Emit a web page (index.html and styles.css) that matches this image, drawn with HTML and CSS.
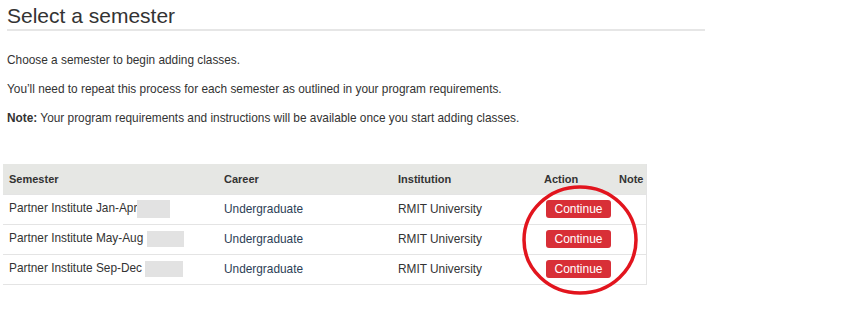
FILE: index.html
```html
<!DOCTYPE html>
<html>
<head>
<meta charset="utf-8">
<link rel="stylesheet" href="styles.css">
</head>
<body>
<div class="page">
  <h1 class="title">Select a semester</h1>
  <p class="intro first">Choose a semester to begin adding classes.</p>
  <p class="intro">You’ll need to repeat this process for each semester as outlined in your program requirements.</p>
  <p class="intro"><b>Note:</b> Your program requirements and instructions will be available once you start adding classes.</p>
  <table class="sem">
    <thead>
      <tr>
        <th class="c1">Semester</th>
        <th class="c2">Career</th>
        <th class="c3">Institution</th>
        <th class="c4">Action</th>
        <th class="c5">Note</th>
      </tr>
    </thead>
    <tbody>
      <tr>
        <td>Partner Institute Jan-Apr<span class="redact r1"></span></td>
        <td class="career">Undergraduate</td>
        <td>RMIT University</td>
        <td><button class="btn">Continue</button></td>
        <td></td>
      </tr>
      <tr>
        <td>Partner Institute May-Aug <span class="redact r2"></span></td>
        <td class="career">Undergraduate</td>
        <td>RMIT University</td>
        <td><button class="btn">Continue</button></td>
        <td></td>
      </tr>
      <tr>
        <td>Partner Institute Sep-Dec <span class="redact r3"></span></td>
        <td class="career">Undergraduate</td>
        <td>RMIT University</td>
        <td><button class="btn">Continue</button></td>
        <td></td>
      </tr>
    </tbody>
  </table>
  <div class="spacer"></div>
  <svg class="circle" width="130" height="120" viewBox="0 0 130 120">
    <ellipse cx="65" cy="59" rx="56" ry="53" fill="none" stroke="#e2151e" stroke-width="3.5"/>
  </svg>
</div>
</body>
</html>
```
FILE: styles.css
```css
html, body {
  margin: 0;
  padding: 0;
  background: #fff;
}
body {
  font-family: "Liberation Sans", Arial, sans-serif;
  color: #333;
}
.page {
  position: relative;
  padding: 4px 0 0 0;
  min-height: 320px;
}
.title {
  margin: 0 0 0 7px;
  width: 698px;
  font-size: 21px;
  font-weight: normal;
  line-height: 24px;
  padding-bottom: 1px;
  border-bottom: 2px solid #e6e6e6;
  color: #333;
}
.intro {
  margin: 0 0 12px 7px;
  font-size: 11.85px;
  line-height: 17px;
}
.intro.first {
  margin-top: 21px;
}
.sem {
  margin: 37px 0 0 3px;
  border-collapse: collapse;
  width: 643px;
  table-layout: fixed;
  font-size: 11.85px;
  border-right: 1px solid #e4e4e4;
  border-bottom: 1px solid #e4e4e4;
}
.sem th {
  background: #e6e7e4;
  height: 30px;
  padding: 0 6px;
  text-align: left;
  font-size: 11px;
  font-weight: bold;
  color: #333;
  box-sizing: border-box;
}
.c1 { width: 215px; }
.c2 { width: 174px; }
.c3 { width: 146px; }
.c4 { width: 75px; }
.c5 { width: 33px; }
.sem td {
  height: 30px;
  padding: 0 6px;
  box-sizing: border-box;
  border-top: 1px solid #e4e4e4;
  white-space: nowrap;
}
.career {
  color: #2c3e55;
}
.redact {
  display: inline-block;
  background: #e2e2e2;
  vertical-align: middle;
}
.r1 { width: 33px; height: 18px; }
.r2 { width: 37px; height: 16px; }
.r3 { width: 38px; height: 16px; }
.btn {
  margin-left: 2px;
  width: 65px;
  height: 18px;
  padding: 0;
  border: none;
  border-radius: 3px;
  background: #d82f37;
  color: #fff;
  font-family: "Liberation Sans", Arial, sans-serif;
  font-size: 12px;
  line-height: 18px;
  vertical-align: middle;
}
.spacer {
  height: 30px;
}
.circle {
  position: absolute;
  display: block;
  overflow: visible;
  left: 515px;
  top: 181px;
  z-index: 2;
}
```
